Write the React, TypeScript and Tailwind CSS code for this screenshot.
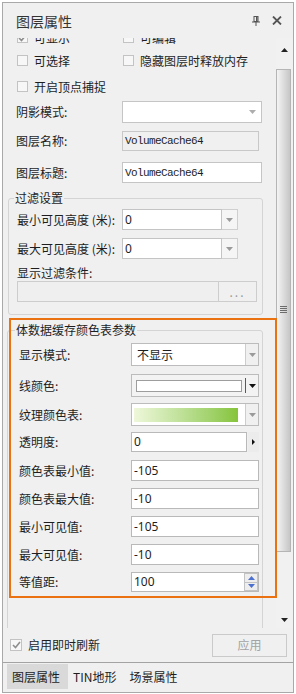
import React from 'react';

const Caret: React.FC<{ color?: string }> = ({ color = '#9a9a9a' }) => (
    <svg width="7" height="4" viewBox="0 0 7 4">
        <path d="M0 0h7L3.5 4z" fill={color} />
    </svg>
);

const CheckBox: React.FC<{ checked?: boolean; big?: boolean }> = ({ checked, big }) => (
    <span
        className={`${big ? 'w-[12px] h-[12px]' : 'w-[11px] h-[11px]'} shrink-0 border border-[#c3c3c3] bg-[#f7f7f7] flex items-center justify-center`}
    >
        {checked && (
            <svg width="9" height="8" viewBox="0 0 9 8">
                <path d="M1 4l2.5 2.5L8 1" stroke="#8e8e8e" strokeWidth="1.6" fill="none" />
            </svg>
        )}
    </span>
);

const Option: React.FC<{ label: string; checked?: boolean; wide?: boolean }> = ({ label, checked, wide }) => (
    <div className={`${wide ? '' : 'w-[106px]'} shrink-0 whitespace-nowrap flex items-center gap-[6px]`}>
        <CheckBox checked={checked} />
        <span>{label}</span>
    </div>
);

const NumBox: React.FC<{ value: string }> = ({ value }) => (
    <div className="w-[128px] h-full border border-[#b9b9b9] bg-white flex items-center pl-[2px] font-['Noto_Sans',sans-serif]">
        {value}
    </div>
);

const FilterCombo: React.FC = () => (
    <div className="w-[116px] h-full flex">
        <div className="w-[100px] h-full border border-[#c4c4c4] bg-white flex items-center pl-[2px] font-['Noto_Sans',sans-serif]">0</div>
        <div className="w-[16px] h-full border border-l-0 border-[#cfcfcf] bg-[#f5f5f5] flex items-center justify-center">
            <Caret />
        </div>
    </div>
);

const ColourRow: React.FC<{ label: string; className: string; children: React.ReactNode }> = ({ label, className, children }) => (
    <div className={`${className} flex items-center pl-[11px]`}>
        <span className="w-[112px] shrink-0">{label}</span>
        {children}
    </div>
);

const App: React.FC = () => {
    return (
        <div className="w-[296px] h-[694px] bg-white pt-[2px] pl-[2px] font-['Noto_Sans_CJK_SC','Noto_Sans',sans-serif] text-[12px] leading-[16px] text-[#1e1e1e]">
            <div className="relative w-[292px] h-[691px] border border-[#a9a9a9] bg-[#f0f0f0] flex flex-col">
                {/* title bar */}
                <div className="h-[35px] shrink-0 flex items-center pl-[13px] pr-[11px]">
                    <span className="text-[14px] text-[#333]">图层属性</span>
                    <div className="ml-auto flex items-center gap-[12px]">
                        <svg width="8" height="10" viewBox="0 0 8 10">
                            <rect x="2" y="0.5" width="4" height="5" fill="none" stroke="#555" />
                            <rect x="4" y="1" width="1.5" height="4.5" fill="#555" />
                            <path d="M0 6h8" stroke="#555" />
                            <path d="M4 6v4" stroke="#555" />
                        </svg>
                        <svg width="10" height="9" viewBox="0 0 10 9">
                            <path d="M1 0.5l8 8M9 0.5l-8 8" stroke="#555" strokeWidth="1.8" />
                        </svg>
                    </div>
                </div>

                {/* scroll viewport */}
                <div className="h-[590px] shrink-0 flex">
                    <div className="w-[273px] shrink-0 overflow-hidden flex flex-col">
                        <div className="-mt-[12px] h-[23px] shrink-0 flex items-center pl-[14px]">
                            <Option label="可显示" checked />
                            <Option label="可编辑" wide />
                        </div>
                        <div className="h-[23px] shrink-0 flex items-center pl-[14px]">
                            <Option label="可选择" />
                            <Option label="隐藏图层时释放内存" wide />
                        </div>
                        <div className="mt-[3px] h-[23px] shrink-0 flex items-center pl-[14px]">
                            <Option label="开启顶点捕捉" wide />
                        </div>

                        <div className="mt-[3px] h-[22px] shrink-0 flex items-center pl-[13px]">
                            <span className="w-[106px] shrink-0">阴影模式:</span>
                            <div className="w-[140px] h-full border border-[#c5c5c5] bg-white flex items-center justify-end pr-[5px]">
                                <Caret color="#adadad" />
                            </div>
                        </div>
                        <div className="mt-[8px] h-[20px] shrink-0 flex items-center pl-[13px]">
                            <span className="w-[106px] shrink-0">图层名称:</span>
                            <div className="w-[137px] h-full border border-[#c8c8c8] bg-[#f0f0f0] flex items-center pl-[2px] font-['Liberation_Mono',monospace] text-[11px] tracking-[-0.6px]">
                                VolumeCache64
                            </div>
                        </div>
                        <div className="mt-[11px] h-[21px] shrink-0 flex items-center pl-[13px]">
                            <span className="w-[106px] shrink-0">图层标题:</span>
                            <div className="w-[140px] h-full border border-[#c5c5c5] bg-white flex items-center pl-[2px] font-['Liberation_Mono',monospace] text-[11px] tracking-[-0.6px]">
                                VolumeCache64
                            </div>
                        </div>

                        {/* 过滤设置 */}
                        <fieldset className="mt-[8px] ml-[5px] w-[255px] shrink-0 border border-[#d4d4d4] rounded-[3px] pb-[12px]">
                            <legend className="ml-[5px] px-[1px] leading-[14px]">过滤设置</legend>
                            <div className="mt-[4px] h-[21px] flex items-center pl-[8px]">
                                <span className="w-[105px] shrink-0">最小可见高度 (米):</span>
                                <FilterCombo />
                            </div>
                            <div className="mt-[8px] h-[21px] flex items-center pl-[8px]">
                                <span className="w-[105px] shrink-0">最大可见高度 (米):</span>
                                <FilterCombo />
                            </div>
                            <div className="mt-[6px] h-[16px] pl-[8px]">显示过滤条件:</div>
                            <div className="h-[21px] flex pl-[8px]">
                                <div className="w-[202px] h-full border border-[#cdcdcd] bg-[#efefef]" />
                                <div className="w-[38px] h-full border border-l-0 border-[#cdcdcd] bg-[#f0f0f0] flex items-center justify-center text-[#9a9a9a] tracking-[2px]">
                                    ...
                                </div>
                            </div>
                        </fieldset>

                        {/* 体数据缓存颜色表参数 */}
                        <fieldset className="mt-[8px] ml-[4px] w-[256px] shrink-0 border border-[#d4d4d4] rounded-[3px] pb-[60px]">
                            <legend className="ml-[7px] px-[1px] leading-[14px]">体数据缓存颜色表参数</legend>
                            <ColourRow label="显示模式:" className="mt-[6px] h-[23px]">
                                <div className="w-[128px] h-full border border-[#bcbcbc] bg-white flex">
                                    <span className="flex-1 flex items-center pl-[5px]">不显示</span>
                                    <span className="w-[13px] border-l border-[#cdcdcd] bg-[#f0f0f0] flex items-center justify-center">
                                        <Caret />
                                    </span>
                                </div>
                            </ColourRow>
                            <ColourRow label="线颜色:" className="mt-[8px] h-[23px]">
                                <div className="w-[128px] h-full border border-[#bcbcbc] bg-[#f3f3f3] flex items-center pl-[4px]">
                                    <span className="w-[106px] h-[12px] border border-[#9d9d9d] bg-white" />
                                    <span className="ml-[3px] w-[1px] h-[15px] bg-[#5a5a5a]" />
                                    <span className="flex-1 flex items-center justify-center">
                                        <Caret color="#111" />
                                    </span>
                                </div>
                            </ColourRow>
                            <ColourRow label="纹理颜色表:" className="mt-[6px] h-[23px]">
                                <div className="w-[128px] h-full border border-[#bcbcbc] bg-white flex items-center pl-[2px]">
                                    <span className="w-[104px] h-[14px] bg-linear-to-r from-[#eef7da] to-[#86c438]" />
                                    <span className="ml-[7px] h-full flex-1 border-l border-[#cdcdcd] bg-[#f0f0f0] flex items-center justify-center">
                                        <Caret />
                                    </span>
                                </div>
                            </ColourRow>
                            <ColourRow label="透明度:" className="mt-[6px] h-[20px]">
                                <div className="w-[116px] h-full border border-[#b9b9b9] bg-white flex items-center pl-[2px] font-['Noto_Sans',sans-serif]">0</div>
                                <div className="ml-[1px] w-[11px] h-full bg-[#ececec] flex items-center justify-center">
                                    <svg width="3" height="6" viewBox="0 0 3 6">
                                        <path d="M0 0l3 3-3 3z" fill="#111" />
                                    </svg>
                                </div>
                            </ColourRow>
                            <ColourRow label="颜色表最小值:" className="mt-[8px] h-[21px]">
                                <NumBox value="-105" />
                            </ColourRow>
                            <ColourRow label="颜色表最大值:" className="mt-[7px] h-[21px]">
                                <NumBox value="-10" />
                            </ColourRow>
                            <ColourRow label="最小可见值:" className="mt-[7px] h-[21px]">
                                <NumBox value="-105" />
                            </ColourRow>
                            <ColourRow label="最大可见值:" className="mt-[7px] h-[21px]">
                                <NumBox value="-10" />
                            </ColourRow>
                            <ColourRow label="等值距:" className="mt-[7px] h-[20px]">
                                <div className="w-[128px] h-full border border-[#b9b9b9] bg-white flex">
                                    <span className="flex-1 flex items-center pl-[2px] font-['Noto_Sans',sans-serif]">100</span>
                                    <span className="w-[14px] flex flex-col">
                                        <span className="flex-1 border border-[#c3c3c3] bg-[#eeeeee] flex items-center justify-center">
                                            <svg width="7" height="4" viewBox="0 0 7 4">
                                                <path d="M0 4h7L3.5 0z" fill="#4d6fcf" />
                                            </svg>
                                        </span>
                                        <span className="flex-1 border border-t-0 border-[#c3c3c3] bg-[#eeeeee] flex items-center justify-center">
                                            <Caret color="#4d6fcf" />
                                        </span>
                                    </span>
                                </div>
                            </ColourRow>
                        </fieldset>
                    </div>

                    {/* scrollbar */}
                    <div className="w-[17px] shrink-0 bg-[#f1f1f1] flex flex-col">
                        <div className="h-[31px] flex justify-center pt-[10px] pr-[1px]">
                            <svg width="7" height="4" viewBox="0 0 7 4">
                                <path d="M0 4h7L3.5 0z" fill="#222" />
                            </svg>
                        </div>
                        <div className="h-[483px] mr-[2px] border border-[#b5b5b5] bg-linear-to-r from-[#f4f4f4] to-[#c6c6c6] flex items-center justify-center">
                            <div className="flex flex-col gap-[1px] -mt-[3px]">
                                <span className="w-[7px] h-[1px] bg-[#6c6c6c]" />
                                <span className="w-[7px] h-[1px] bg-[#6c6c6c]" />
                                <span className="w-[7px] h-[1px] bg-[#6c6c6c]" />
                                <span className="w-[7px] h-[1px] bg-[#6c6c6c]" />
                            </div>
                        </div>
                        <div className="flex-1 flex items-end justify-center pb-[6px] pr-[1px]">
                            <Caret color="#222" />
                        </div>
                    </div>
                </div>

                {/* bottom actions */}
                <div className="h-[34px] shrink-0 flex items-center pl-[7px] pr-[6px]">
                    <CheckBox checked big />
                    <span className="ml-[6px]">启用即时刷新</span>
                    <div className="ml-auto w-[75px] h-[23px] border border-[#cacaca] bg-[#f0f0f0] flex items-center justify-center text-[#a3a3a3]">
                        应用
                    </div>
                </div>

                {/* tabs */}
                <div className="flex-1 border-t border-[#a3a3a3] flex pl-[4px] pt-[1px]">
                    <div className="w-[61px] h-[25px] bg-[#d9d9d9] flex items-center pl-[5px]">图层属性</div>
                    <div className="h-[25px] flex items-center pl-[5px] pr-[8px]">TIN地形</div>
                    <div className="h-[25px] flex items-center pl-[5px] pr-[8px]">场景属性</div>
                </div>

                {/* highlight frame */}
                <div className="absolute left-[6px] top-[315px] w-[268px] h-[280px] border-2 border-[#ea7210] pointer-events-none" />
            </div>
        </div>
    );
};

export default App;
